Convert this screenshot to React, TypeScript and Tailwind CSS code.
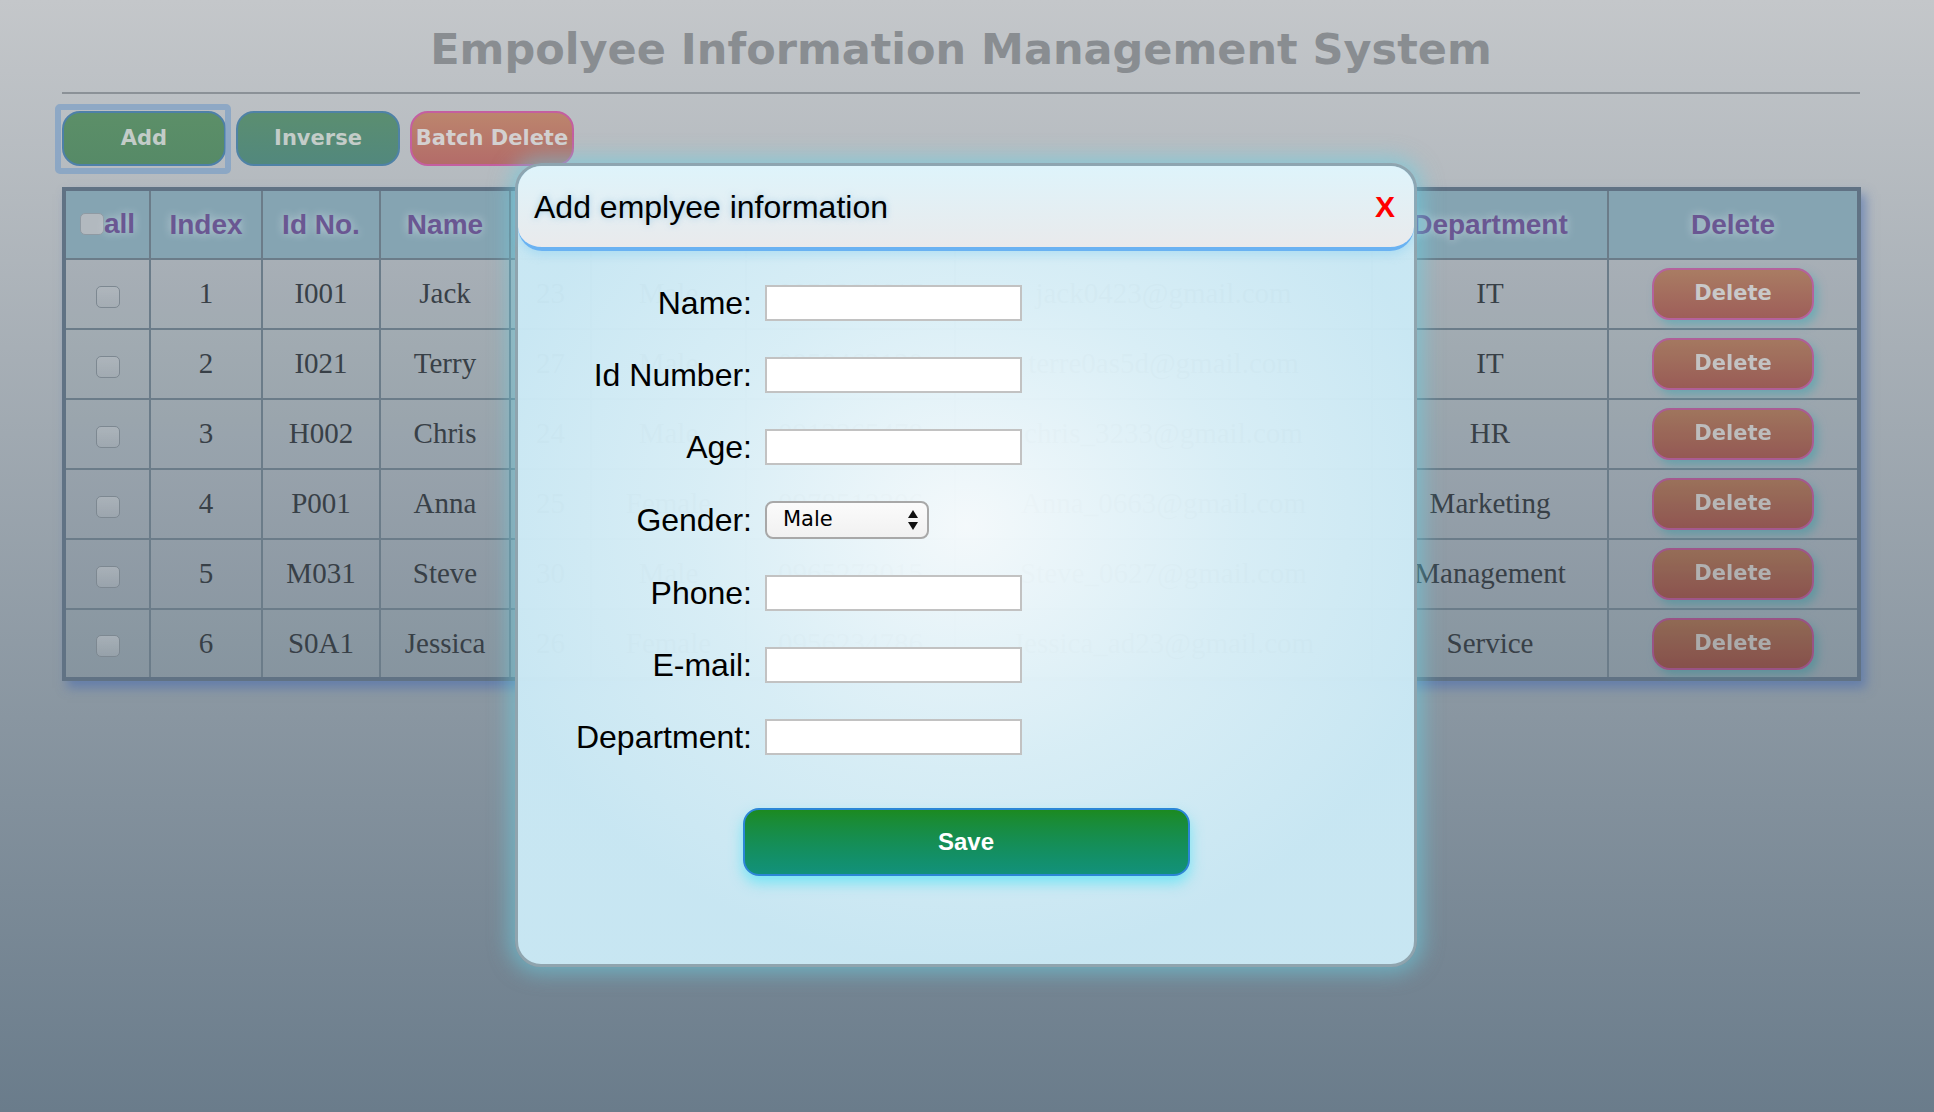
import { useState } from "react";

const rows = [
  { idx: 1, id: "I001", name: "Jack", age: 23, gender: "Male", phone: "0958234617", email: "jack0423@gmail.com", dept: "IT", dim: "" },
  { idx: 2, id: "I021", name: "Terry", age: 27, gender: "Male", phone: "0958462130", email: "terre0as5d@gmail.com", dept: "IT", dim: "brightness-[0.97]" },
  { idx: 3, id: "H002", name: "Chris", age: 24, gender: "Male", phone: "0912365478", email: "chris_3233@gmail.com", dept: "HR", dim: "brightness-[0.94]" },
  { idx: 4, id: "P001", name: "Anna", age: 25, gender: "Female", phone: "0978512306", email: "Anna_0663@gmail.com", dept: "Marketing", dim: "brightness-[0.91]" },
  { idx: 5, id: "M031", name: "Steve", age: 30, gender: "Male", phone: "0965273015", email: "Steve_0627@gmail.com", dept: "Management", dim: "brightness-[0.88]" },
  { idx: 6, id: "S0A1", name: "Jessica", age: 26, gender: "Female", phone: "0956234786", email: "Jessica_ad23@gmail.com", dept: "Service", dim: "brightness-[0.85]" },
];

const headers = ["Index", "Id No.", "Name", "Age", "Gender", "Phone", "E-mail", "Department", "Delete"];
const colWidths = ["w-[86px]", "w-[112px]", "w-[118px]", "w-[130px]", "w-[81px]", "w-[155px]", "w-[209px]", "w-[417px]", "w-[236px]", "w-[251px]"];

const fields = ["Name", "Id Number", "Age", "Gender", "Phone", "E-mail", "Department"];

function Checkbox({ light }: { light?: boolean }) {
  return (
    <span
      className={
        "inline-block h-[22px] w-[24px] rounded-[5px] border-[1.5px] align-middle " +
        (light ? "border-[#8f9aa3] bg-[#b2b9bf]" : "border-[#7d8891] bg-linear-to-b from-[#b3bac0]/70 to-[#a4acb3]/50")
      }
    />
  );
}

function FormRow({ label }: { label: string }) {
  return (
    <div className="flex items-center gap-[13px]">
      <label className="w-[234px] text-right text-[32px] leading-none text-black">{label}:</label>
      {label === "Gender" ? (
        <div className="flex h-[38px] w-[164px] items-center justify-between rounded-[8px] border-2 border-[#a8a8a8] bg-linear-to-b from-[#fbfbfb] to-[#f1f1f1] pl-[16px] pr-[8px]">
          <span className="font-['DejaVu_Sans',sans-serif] text-[21px] text-black">Male</span>
          <svg width="12" height="24" viewBox="0 0 12 24">
            <path d="M6 2 L11 10 L1 10 Z" fill="#111" />
            <path d="M1 14 L11 14 L6 22 Z" fill="#111" />
          </svg>
        </div>
      ) : (
        <input className="h-[36px] w-[257px] border-2 border-[#c2c2c2] bg-white outline-none" />
      )}
    </div>
  );
}

export default function App() {
  const [open] = useState(true);

  return (
    <div className="relative h-[1112px] w-full overflow-hidden bg-linear-to-b from-[#c4c7ca] to-[#6a7c8b]">
      <div className="ml-[62px] w-[1798px]">
        <h1 className="pt-[28px] text-center font-['DejaVu_Sans',sans-serif] text-[43px] font-bold leading-none text-[#898d91]">
          Empolyee Information Management System
        </h1>
        <div className="mt-[21px] h-[2px] bg-[#8b9197]" />

        <div className="mt-[17px] flex gap-[10px] font-['DejaVu_Sans',sans-serif] text-[21px] font-bold">
          <button className="relative h-[55px] w-[164px] rounded-[18px] border-2 border-[#4e80a8] bg-linear-to-b from-[#5c8f68] to-[#568a67] text-[#c3ccc8]">
            <span className="pointer-events-none absolute -bottom-[10px] -left-[9px] -right-[7px] -top-[9px] rounded-[5px] border-[6px] border-[#7b9ec6]/70" />
            Add
          </button>
          <button className="h-[55px] w-[164px] rounded-[18px] border-2 border-[#4f82a6] bg-linear-to-b from-[#5b8e70] to-[#52887d] text-[#c3ccc8]">
            Inverse
          </button>
          <button className="h-[55px] w-[164px] rounded-[18px] border-2 border-[#c45fa0] bg-linear-to-b from-[#bc856d] to-[#b36c69] text-[#d3d0d0]">
            Batch Delete
          </button>
        </div>

        <div className="mt-[21px] w-fit shadow-[5px_7px_10px_rgba(70,105,175,0.55)]">
          <table className="w-[1795px] table-fixed border-collapse border-[4px] border-[#607284] bg-[#2a4a66]/[0.05]">
            <colgroup>
              {colWidths.map((w, i) => (
                <col key={i} className={w} />
              ))}
            </colgroup>
            <thead>
              <tr className="bg-[#85a4b2] font-['Liberation_Sans',Arial,sans-serif] text-[28px] font-bold text-[#6a5792] [text-shadow:0_0_10px_rgba(235,245,250,0.6)]">
                <th className="h-[70px] border-2 border-[#6b7c89]">
                  <span className="inline-flex items-center">
                    <Checkbox light />
                    <span>all</span>
                  </span>
                </th>
                {headers.map((h) => (
                  <th key={h} className="h-[70px] border-2 border-[#6b7c89]">
                    {h}
                  </th>
                ))}
              </tr>
            </thead>
            <tbody className="font-['Liberation_Serif',serif] text-[29px] text-[#384047]">
              {rows.map((r) => (
                <tr key={r.idx} className="text-center">
                  <td className="h-[70px] border-2 border-[#6b7c89]">
                    <Checkbox />
                  </td>
                  <td className="border-2 border-[#6b7c89]">{r.idx}</td>
                  <td className="border-2 border-[#6b7c89]">{r.id}</td>
                  <td className="border-2 border-[#6b7c89]">{r.name}</td>
                  <td className="border-2 border-[#6b7c89]">{r.age}</td>
                  <td className="border-2 border-[#6b7c89]">{r.gender}</td>
                  <td className="border-2 border-[#6b7c89]">{r.phone}</td>
                  <td className="border-2 border-[#6b7c89]">{r.email}</td>
                  <td className="border-2 border-[#6b7c89]">{r.dept}</td>
                  <td className="border-2 border-[#6b7c89]">
                    <button
                      className={
                        "h-[52px] w-[162px] rounded-[18px] border-2 border-[#b4629c] bg-linear-to-b from-[#a97c63] to-[#9e5e59] font-['DejaVu_Sans',sans-serif] text-[21px] font-bold text-[#c9c9c9] shadow-[4px_5px_8px_rgba(95,170,180,0.75)] " +
                        r.dim
                      }
                    >
                      Delete
                    </button>
                  </td>
                </tr>
              ))}
            </tbody>
          </table>
        </div>
      </div>

      {open && (
        <div className="absolute left-[515px] top-[163px] flex h-[804px] w-[902px] flex-col rounded-[26px] border-[3px] border-[#8fa4ae] bg-[radial-gradient(ellipse_55%_55%_at_50%_45%,rgba(246,251,253,0.975)_0%,rgba(218,240,248,0.97)_55%,rgba(202,233,245,0.97)_100%)] font-['Liberation_Sans',Arial,sans-serif] shadow-[0_0_20px_6px_rgba(105,210,228,0.55)]">
          <div className="flex h-[85px] shrink-0 items-center justify-between rounded-[24px] border-b-[4px] border-[#6ab2f2] bg-linear-to-b from-[#def4fb] to-[#e9eaec] pl-[16px] pr-[19px] shadow-[0_4px_10px_rgba(120,200,240,0.35)]">
            <h2 className="text-[32px] leading-none text-black [text-shadow:0_0_6px_rgba(120,185,225,0.6)]">
              Add emplyee information
            </h2>
            <span className="text-[30px] font-bold leading-none text-[#ff0000]">X</span>
          </div>

          <form className="flex flex-col gap-[36px] pt-[34px]">
            {fields.map((f) => (
              <FormRow key={f} label={f} />
            ))}
          </form>

          <button className="mx-auto mt-[53px] h-[68px] w-[447px] rounded-[16px] border-2 border-[#2b86d6] bg-linear-to-b from-[#1c8a1f] to-[#12917b] text-[24px] font-bold text-white shadow-[0_7px_14px_rgba(95,228,245,0.8)]">
            Save
          </button>
        </div>
      )}
    </div>
  );
}
